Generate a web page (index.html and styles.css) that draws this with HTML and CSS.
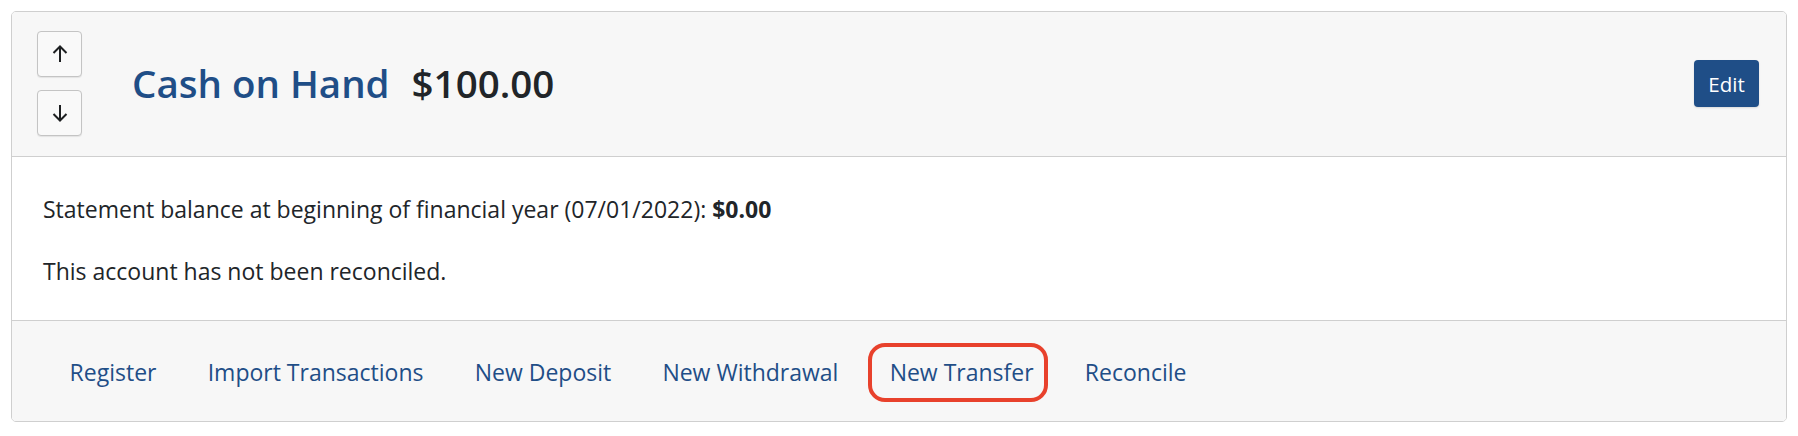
FILE: index.html
```html
<!DOCTYPE html>
<html lang="en">
<head>
    <meta charset="UTF-8">
    <title>Cash on Hand</title>
    <link rel="stylesheet" href="styles.css">
</head>
<body>
<div class="card">
    <div class="card-header">
        <div class="order-btns">
            <button class="btn-order" title="Move up">
                <svg width="16" height="18" viewBox="0 0 16 18"><path d="M8 17V1.5M1.5 8L8 1.5 14.5 8"/></svg>
            </button>
            <button class="btn-order" title="Move down">
                <svg width="16" height="18" viewBox="0 0 16 18"><path d="M8 1v15.5M1.5 10l6.5 6.5 6.5-6.5"/></svg>
            </button>
        </div>
        <h2 class="account-title">
            <span class="account-name">Cash on Hand</span>
            <span class="account-balance">$100.00</span>
        </h2>
        <button class="btn-edit">Edit</button>
    </div>
    <div class="card-body">
        <p>Statement balance at beginning of financial year (07/01/2022): <strong>$0.00</strong></p>
        <p>This account has not been reconciled.</p>
    </div>
    <div class="card-footer">
        <ul class="account-links">
            <li><a href="#">Register</a></li>
            <li><a href="#">Import Transactions</a></li>
            <li><a href="#">New Deposit</a></li>
            <li><a href="#">New Withdrawal</a></li>
            <li><a href="#" class="highlight">New Transfer<span class="callout"></span></a></li>
            <li><a href="#">Reconcile</a></li>
        </ul>
    </div>
</div>
</body>
</html>
```

FILE: styles.css
```css
*{ margin:0; padding:0; box-sizing:border-box;}
body{
    margin: 11px;
    font-family: "Open Sans", "Noto Sans", sans-serif;
    font-size: 23px;
    line-height: 33.75px;
    color: #212529;
    background: #fff;
}
.card{
    border: 1px solid #cfcfcf;
    border-radius: 5px;
    overflow: hidden;
}
.card-header{
    display: flex;
    align-items: center;
    padding: 19px 27px 20px 25px;
    background: #f7f7f7;
    border-bottom: 1px solid #cfcfcf;
}
.order-btns{
    display: flex;
    flex-direction: column;
    gap: 13px;
}
.btn-order{
    width: 45px;
    height: 46px;
    display: flex;
    align-items: center;
    justify-content: center;
    background: #f9f9f9;
    border: 1px solid #c4c4c4;
    border-radius: 4px;
    box-shadow: 0 1px 1px rgba(0,0,0,.08);
    cursor: pointer;
}
.btn-order svg path{
    fill: none;
    stroke: #1d1f21;
    stroke-width: 2;
}
.account-title{
    margin-left: 50px;
    font-size: 38.5px;
    font-weight: 600;
    line-height: 1.2;
}
.account-name{
    color: #1f4e87;
}
.account-balance{
    margin-left: 12px;
    color: #212529;
}
.btn-edit{
    margin-left: auto;
    width: 65px;
    height: 47px;
    background: #1f4e87;
    color: #fff;
    border: 0;
    border-radius: 4px;
    font-family: inherit;
    font-size: 20.5px;
    box-shadow: 0 1px 2px rgba(0,0,0,.12);
    cursor: pointer;
}
.card-body{
    padding: 36px 31px 31px;
    background: #fff;
}
.card-body p{
    margin-bottom: 28px;
}
.card-body p:last-child{
    margin-bottom: 0;
}
.card-footer{
    padding: 35px 31px 32px 32px;
    background: #f7f7f7;
    border-top: 1px solid #cfcfcf;
}
.account-links{
    display: flex;
    list-style: none;
}
.account-links a{
    display: block;
    position: relative;
    padding: 0 25.6px;
    color: #1f4e87;
    text-decoration: none;
}
.callout{
    position: absolute;
    left: 4px;
    right: 11px;
    top: -13px;
    bottom: -13px;
    border: 4px solid #e8412c;
    border-radius: 17px;
}
```
